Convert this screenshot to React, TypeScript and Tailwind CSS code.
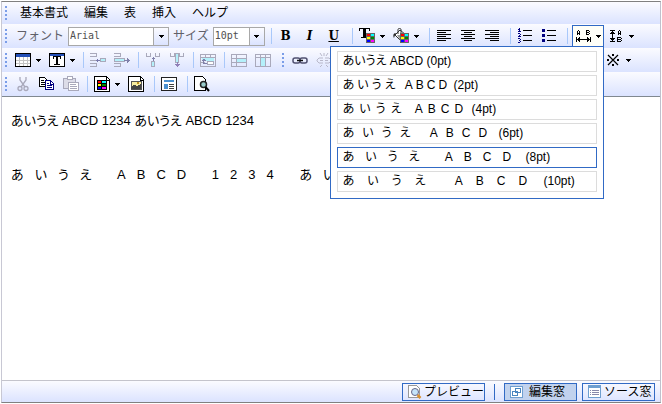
import React, { useState } from "react";
import type { ReactNode } from "react";

const NAVY = "#000080";
const CYAN = "#b4f0fa";
const DIM = "#a9a9bb";

function Icon({ children, size = 16 }: { children: ReactNode; size?: number }) {
  return (
    <svg width={size} height={size} viewBox={`0 0 ${size} ${size}`} fill="none" shapeRendering="crispEdges" aria-hidden="true" className="shrink-0">
      {children}
    </svg>
  );
}

function Arrow() {
  return (
    <svg width="5" height="3" viewBox="0 0 5 3" shapeRendering="crispEdges" aria-hidden="true" className="shrink-0">
      <path d="M0 0h5v1H0zM1 1h3v1H1zM2 2h1v1H2z" fill="#000" />
    </svg>
  );
}

function Handle() {
  return (
    <div className="flex shrink-0 flex-col gap-0.5" aria-hidden="true">
      <span className="size-0.5 bg-[#7a9de8]" />
      <span className="size-0.5 bg-[#7a9de8]" />
      <span className="size-0.5 bg-[#7a9de8]" />
      <span className="size-0.5 bg-[#7a9de8]" />
    </div>
  );
}

function Sep({ tight = false }: { tight?: boolean }) {
  return <div className={`${tight ? "ml-1" : "ml-1.5"} mr-0.5 h-4 w-px shrink-0 bg-[#a9c8fa]`} />;
}

function Tool({ label, children }: { label: string; children: ReactNode }) {
  return (
    <button type="button" aria-label={label} className="flex h-5 w-6 shrink-0 items-center justify-center font-['DejaVu_Serif','Liberation_Serif',serif] text-xs font-bold">
      {children}
    </button>
  );
}

function DropTool({ label, children }: { label: string; children: ReactNode }) {
  return (
    <button type="button" aria-label={label} aria-haspopup="menu" className="flex h-5 w-[34px] shrink-0 items-center gap-[5px] px-1">
      {children}
      <Arrow />
    </button>
  );
}

function Row({ children }: { children: ReactNode }) {
  return <div className="flex h-6 items-center bg-linear-to-b from-[#fbfbff] to-[#dbe3ff] pl-[3px]">{children}</div>;
}

function Swatches({ x, y, s = 3 }: { x: number; y: number; s?: number }) {
  const colors = ["#f00", "#0ff", "#ff0", "#080", "#00f", "#f0f"];
  return (
    <>
      <rect x={x} y={y} width={9} height={10} fill="#666" />
      {colors.map((c, i) => (
        <rect key={c} x={x + 1 + (i % 2) * 4} y={y + 1 + Math.floor(i / 2) * 3} width={s} height={2} fill={c} />
      ))}
    </>
  );
}

function Combo({ label, value, options, width }: { label: string; value: string; options: string[]; width: string }) {
  return (
    <label className="flex shrink-0 items-center gap-1 text-[#606068]">
      {label}
      <span className={`relative block ${width}`}>
        <select
          defaultValue={value}
          className="block h-[19px] w-full appearance-none border border-[#a8a8a8] bg-white pl-px font-['DejaVu_Sans_Mono',monospace] text-[10px] text-[#505050]"
        >
          {options.map((o) => (
            <option key={o}>{o}</option>
          ))}
        </select>
        <span className="pointer-events-none absolute inset-y-0 right-0 flex w-4 items-center justify-center border border-[#a8a8a8] bg-linear-to-b from-[#fbfbff] to-[#dbe3ff]">
          <Arrow />
        </span>
      </span>
    </label>
  );
}

const spacings = [
  { pt: "0pt", tracking: "" },
  { pt: "2pt", tracking: "tracking-[3px]" },
  { pt: "4pt", tracking: "tracking-[5px]" },
  { pt: "6pt", tracking: "tracking-[8px]" },
  { pt: "8pt", tracking: "tracking-[11px]" },
  { pt: "10pt", tracking: "tracking-[13px]" },
];

function SpacingMenu() {
  const [current, setCurrent] = useState("8pt");
  return (
    <div role="menu" className="absolute top-5 -right-px z-10 flex w-[274px] flex-col gap-[3px] border border-[#316ac5] bg-white px-1.5 pt-1 pb-1.5">
      {spacings.map((s) => (
        <button
          key={s.pt}
          type="button"
          role="menuitemradio"
          aria-checked={s.pt === current}
          onClick={() => setCurrent(s.pt)}
          className={`h-[21px] border pl-[5px] text-left font-['Liberation_Sans','Noto_Sans_CJK_JP',sans-serif] text-xs/[19px] whitespace-pre text-black [font-feature-settings:'palt'] ${
            s.pt === current ? "border-[#316ac5]" : "border-[#dcdcdc]"
          }`}
        >
          <span className={s.tracking}>あいうえ ABCD</span> ({s.pt})
        </button>
      ))}
    </div>
  );
}

function StatusButton({ active = false, width, icon, children }: { active?: boolean; width: string; icon: ReactNode; children: ReactNode }) {
  return (
    <button
      type="button"
      className={`flex h-[18px] shrink-0 items-center border border-[#316ac5] pl-1 whitespace-nowrap ${width} ${active ? "gap-1 bg-[#c1d2ee]" : "gap-px"}`}
    >
      {icon}
      <span className="leading-4">{children}</span>
    </button>
  );
}

export default function App() {
  return (
    <div className="h-screen bg-white p-px font-['Liberation_Sans','Noto_Sans_CJK_JP',sans-serif] text-xs text-black">
      <div className="flex h-full flex-col border border-[#808080] border-l-[#c8c8d4] border-r-[#c0c0cc]">
        <header className="border-b border-[#808890]">
          <nav className="flex h-[22px] items-center bg-linear-to-b from-[#fbfbff] to-[#dbe3ff] pl-[3px]">
            <Handle />
            <div className="ml-[5px] flex">
              {["基本書式", "編集", "表", "挿入", "ヘルプ"].map((m) => (
                <button key={m} type="button" className="px-2 leading-5">
                  {m}
                </button>
              ))}
            </div>
          </nav>

          <Row>
            <Handle />
            <div className="mr-1 ml-[9px]">
              <Combo label="フォント" value="Arial" options={["Arial", "Times"]} width="w-[101px]" />
            </div>
            <Combo label="サイズ" value="10pt" options={["10pt", "12pt"]} width="w-[52px]" />
            <Sep />
            <Tool label="太字">B</Tool>
            <Tool label="斜体">
              <i>I</i>
            </Tool>
            <Tool label="下線">
              <u>U</u>
            </Tool>
            <Sep />
            <DropTool label="文字色">
              <Icon>
                <path d="M0 0h11v3h-1V1H7v8h2v1H2V9h2V1H1v2H0z" fill="#000" />
                <Swatches x={7} y={5} />
              </Icon>
            </DropTool>
            <DropTool label="背景色">
              <Icon>
                <g shapeRendering="auto">
                  <path d="M2 7l5-5 6 5-6 5z" fill="#fff" stroke="#333" />
                  <path d="M4 7l6 0 2 1-5 4z" fill="#999" />
                  <path d="M5 6V1.500a1.500 1 0 0 1 3 0V5" stroke="#333" />
                  <path d="M3 5C0 5 0 8 1 10l1-3z" fill="#222" />
                </g>
                <Swatches x={7} y={5} />
              </Icon>
            </DropTool>
            <Sep />
            <Tool label="左揃え">
              <Icon>
                <path d="M1 2.500h14M1 4.500h9M1 6.500h14M1 8.500h9M1 10.500h14M1 12.500h9" stroke="#000" />
              </Icon>
            </Tool>
            <Tool label="中央揃え">
              <Icon>
                <path d="M1 2.500h14M4 4.500h8M1 6.500h14M4 8.500h8M1 10.500h14M4 12.500h8" stroke="#000" />
              </Icon>
            </Tool>
            <Tool label="右揃え">
              <Icon>
                <path d="M1 2.500h14M6 4.500h9M1 6.500h14M6 8.500h9M1 10.500h14M6 12.500h9" stroke="#000" />
              </Icon>
            </Tool>
            <Sep />
            <Tool label="番号付きリスト">
              <Icon>
                <path d="M6 2.500h9M6 7.500h9M6 12.500h9" stroke="#000" />
                <path d="M1 1.500h1M2.500 0v4M1 3.500h3M1 5.500h2M3.500 6v1M2.500 7v1M1 8.500h3M1 10.500h2M3.500 11v1M2 12.500h1M3.500 13v1M1 14.500h2" stroke={NAVY} />
              </Icon>
            </Tool>
            <Tool label="箇条書き">
              <Icon>
                <path d="M6 2.500h9M6 7.500h9M6 12.500h9" stroke="#000" />
                <path d="M1 1h3v3H1zM1 6h3v3H1zM1 11h3v3H1z" fill={NAVY} />
              </Icon>
            </Tool>
            <Sep />
            <div className="relative ml-0.5 h-[22px] w-8 shrink-0 border border-[#316ac5] bg-[#fffff7]">
              <button type="button" aria-label="文字間隔" aria-haspopup="menu" aria-expanded="true" className="flex h-5 w-full items-center gap-1 pl-[3px]">
                <Icon>
                  <path d="M2.500 2v1M1.500 3v4M3.500 3v4M2 5.500h1M10.500 2v5M11 2.500h2M11 4.500h2M11 6.500h2M13.500 3v1M13.500 5v1" stroke="#000" />
                  <path d="M.5 9v5M14.500 9v5M1 11.500h13M2.500 10v3M3.500 9v5M12.500 10v3M11.500 9v5" stroke="#000" />
                </Icon>
                <Arrow />
              </button>
              <SpacingMenu />
            </div>
            <DropTool label="行間隔">
              <Icon>
                <path d="M2 2.500h5M2 13.500h5M4.500 3v10M3 4.500h3M3 11.500h3M2 5.500h5M2 10.500h5" stroke="#000" />
                <path d="M11.500 2v1M10.500 3v4M12.500 3v4M11 5.500h1M9.500 9v5M10 9.500h3M10 11.500h3M10 13.500h3M13.500 10v1M13.500 12v1" stroke="#000" />
              </Icon>
            </DropTool>
          </Row>

          <Row>
            <Handle />
            <div className="ml-1 flex shrink-0 items-center">
              <DropTool label="表の挿入">
                <Icon>
                  <path d="M.5 1.500h15v13H.5z" fill="#fff" stroke="#000" />
                  <path d="M1 2h14v3H1z" fill="#2450b8" />
                  <path d="M1 8.500h14M1 11.500h14M4.500 5v9M8.500 5v9M12.500 5v9" stroke="#c4c4c4" />
                </Icon>
              </DropTool>
              <DropTool label="表の文字">
                <Icon>
                  <path d="M.5 1.500h15v13H.5z" fill="#fff" stroke="#000" />
                  <path d="M1 2h14v2H1z" fill="#2450b8" />
                  <path d="M4 4h8v3h-1V5H9v7h2v1H5v-1h2V5H5v2H4z" fill="#000" />
                </Icon>
              </DropTool>
              <Sep tight />
              <Tool label="行の挿入">
                <Icon>
                  <path d="M0 1.500h6v3H0M0 11.500h6v3H0M0 8h6" stroke={DIM} />
                  <path d="M6 8.500h4M7.500 7v3" stroke="#7878aa" />
                  <path d="M10.500 6.500h5v3h-5z" fill={CYAN} stroke={DIM} />
                </Icon>
              </Tool>
              <Tool label="行の追加">
                <Icon>
                  <path d="M0 1.500h6v3H0M0 11.500h6v3H0" stroke={DIM} />
                  <path d="M0 6.500h10v3H0z" fill={CYAN} stroke={DIM} />
                  <path d="M10 8.500h6M13.500 6v5M14.500 7v3" stroke="#8080aa" />
                </Icon>
              </Tool>
              <Sep tight />
              <Tool label="列の挿入">
                <Icon>
                  <path d="M1.500 1v3h4V1M10.500 1v3h4V1" stroke={DIM} />
                  <path d="M6.500 9.500h3v5h-3z" fill={CYAN} stroke={DIM} />
                  <path d="M8.500 5v4M7 6.500h3" stroke="#8080aa" />
                </Icon>
              </Tool>
              <Tool label="列の追加">
                <Icon>
                  <path d="M1.500 1v3h4V1M10.500 1v3h4V1" stroke={DIM} />
                  <path d="M6.500 1v9h3V1z" fill={CYAN} stroke={DIM} />
                  <path d="M8.500 10v5M6 12.500h5M7 13.500h3" stroke="#9080b8" />
                </Icon>
              </Tool>
              <Sep tight />
              <Tool label="セルの結合">
                <Icon>
                  <path d="M.5 2.500h15v12H.5zM0 5.500h16M5.500 2v3M10.500 2v3M0 10.500h5" stroke={DIM} />
                  <path d="M2 6h12v3H2z" fill={CYAN} />
                  <path d="M7.500 9.500h6v3h-6z" fill="#fff" stroke={DIM} />
                  <path d="M3.500 7v4h3M2 8.500h4M3 7.500h2" stroke="#8080aa" />
                </Icon>
              </Tool>
              <Sep tight />
              <Tool label="行の選択">
                <Icon>
                  <path d="M5 6h10v4H5z" fill={CYAN} />
                  <path d="M.5 2.500h15v12H.5zM0 6.500h16M0 10.500h16M5.500 2v12" stroke={DIM} />
                </Icon>
              </Tool>
              <Tool label="列の選択">
                <Icon>
                  <path d="M6 6h5v8H6z" fill={CYAN} />
                  <path d="M.5 2.500h15v12H.5zM0 5.500h16M5.500 2v12M10.500 2v12" stroke={DIM} />
                </Icon>
              </Tool>
            </div>
            <div className="mr-1 ml-[7px]">
              <Handle />
            </div>
            <Tool label="リンク">
              <Icon>
                <g shapeRendering="auto" strokeWidth="1.500">
                  <rect x="1" y="6" width="7" height="5" rx="2" stroke="#505070" />
                  <rect x="8" y="6" width="7" height="5" rx="2" stroke="#505070" />
                  <path d="M5 8.500h6" stroke="#111" />
                </g>
              </Icon>
            </Tool>
            <Tool label="リンク解除">
              <Icon>
                <g shapeRendering="auto" stroke="#b8b8ca">
                  <path d="M7 6H3L1 8v1l2 2h4M9 6h4l2 2v1l-2 2H9M4 8.500h3M9 8.500h3M6 4L4 1M10 4l2-3M6 13l-2 2M10 13l2 2M8 1v3" />
                </g>
              </Icon>
            </Tool>
            <div className="ml-[265px]">
              <DropTool label="記号">
                <Icon>
                  <g shapeRendering="auto">
                    <path d="M3 3l10 10M13 3L3 13" stroke="#000" strokeWidth="1.200" />
                  </g>
                  <path d="M7 2h2v2H7zM7 12h2v2H7zM2 7h2v2H2zM12 7h2v2h-2z" fill="#000" />
                </Icon>
              </DropTool>
            </div>
          </Row>

          <Row>
            <Handle />
            <div className="ml-1 flex items-center">
              <Tool label="切り取り">
                <Icon>
                  <g shapeRendering="auto" stroke={DIM} strokeWidth="1.300">
                    <path d="M5 1v3l5 7M11 1v3L6 11" />
                    <circle cx="5" cy="12.500" r="2" />
                    <circle cx="11" cy="12.500" r="2" />
                  </g>
                </Icon>
              </Tool>
              <Tool label="コピー">
                <Icon>
                  <path d="M.5 1.500h5l3 3v6h-8z" fill="#fff" stroke="#000" />
                  <path d="M2 4.500h3M2 6.500h5M2 8.500h5" stroke="#000" />
                  <path d="M6.500 4.500h5l3 3v6h-8z" fill="#fff" stroke={NAVY} />
                  <path d="M11.500 5v3h3M8 7.500h2M8 9.500h5M8 11.500h5" stroke={NAVY} />
                </Icon>
              </Tool>
              <Tool label="貼り付け">
                <Icon>
                  <path d="M.5 2.500h12v10H.5z" fill="#dcdce8" stroke={DIM} />
                  <path d="M4 .5h5v3H4z" fill="#fff" stroke={DIM} />
                  <path d="M5.500 6.500h10v8h-10z" fill="#fff" stroke={DIM} />
                  <path d="M7 8.500h6M7 10.500h7M7 12.500h7" stroke={DIM} />
                </Icon>
              </Tool>
              <Sep tight />
              <DropTool label="配色">
                <Icon>
                  <path d="M.5 .5h12l3 3v12H.5z" fill="#fff" stroke="#000" />
                  <path d="M12.500 1v3h3" stroke="#000" />
                  <path d="M3 4h10v10H3z" fill="#000" />
                  <path d="M4 5h3v2H4z" fill="#f00" />
                  <path d="M8 5h4v2H8z" fill="#0ff" />
                  <path d="M4 8h3v2H4z" fill="#ff0" />
                  <path d="M8 8h4v2H8z" fill="#080" />
                  <path d="M4 11h3v2H4z" fill="#00f" />
                  <path d="M8 11h4v2H8z" fill="#f0f" />
                </Icon>
              </DropTool>
              <Tool label="画像">
                <Icon>
                  <path d="M.5 .5h12l3 3v12H.5z" fill="#fff" stroke="#000" />
                  <path d="M12.500 1v3h3" stroke="#000" />
                  <path d="M3 5h10v8H3z" fill="#f7eda0" stroke="#555" />
                  <path d="M3 11l3-2 3 1 4-2v5H3z" fill="#444" />
                  <path d="M9 6h2v2H9z" fill="#c09020" />
                </Icon>
              </Tool>
              <Sep />
              <Tool label="プロパティ">
                <Icon>
                  <path d="M.5 1.500h15v13H.5z" fill="#fff" stroke="#222" />
                  <path d="M3 4h10v2H3zM3 8h4v5H3z" fill="#4a90d0" />
                  <path d="M8 8.500h5M8 10.500h5M8 12.500h5" stroke="#444" />
                </Icon>
              </Tool>
              <Sep />
              <Tool label="検索">
                <Icon>
                  <path d="M.5 .5h8l3 3v11H.5z" fill="#fff" stroke="#000" />
                  <g shapeRendering="auto">
                    <circle cx="9.500" cy="8.500" r="3" fill="#9cc" stroke="#222" strokeWidth="1.500" />
                    <path d="M11.500 11l3.500 4" stroke="#000" strokeWidth="2" />
                  </g>
                </Icon>
              </Tool>
            </div>
          </Row>
        </header>

        <main className="flex-1 px-[9px] pt-[15px] text-[13px]/[18px] [font-feature-settings:'palt']">
          <p>あいうえ ABCD 1234 あいうえ ABCD 1234</p>
          <p className="mt-9 tracking-[11px] whitespace-nowrap">あいうえ ABCD 1234 あい</p>
        </main>

        <footer className="flex h-[22px] items-center justify-end border-t border-[#c4c4cc] bg-linear-to-b from-[#fbfbff] to-[#dbe3ff] pr-[5px]">
          <StatusButton
            width="w-[83px]"
            icon={
              <Icon>
                <path d="M1.500 1.500h8l3 3v9h-11z" fill="#fff" stroke="#999" />
                <g shapeRendering="auto">
                  <circle cx="8" cy="8" r="3.500" fill="#c4e4fa" stroke="#668" />
                  <path d="M10.500 11l3 3" stroke="#d89030" strokeWidth="2.500" />
                </g>
              </Icon>
            }
          >
            プレビュー
          </StatusButton>
          <div className="mx-[9px] h-4 w-px bg-[#316ac5]" />
          <StatusButton
            active
            width="w-[73px]"
            icon={
              <Icon>
                <path d="M1.500 2.500h12v11h-12z" fill="#fff" stroke="#6f9fd0" />
                <path d="M6.500 4.500h5v4h-5zM3.500 7.500h5v4h-5z" fill="#fff" stroke="#4a86c0" />
              </Icon>
            }
          >
            編集窓
          </StatusButton>
          <div className="ml-[5px]">
            <StatusButton
              width="w-[73px]"
              icon={
                <Icon>
                  <path d="M1.500 1.500h12v12h-12z" fill="#fff" stroke="#6f9fd0" />
                  <path d="M2 2h11v2H2z" fill="#6f9fd0" />
                  <path d="M3 6.500h1M5 6.500h7M3 8.500h1M5 8.500h7M3 10.500h1M5 10.500h7" stroke="#88a" />
                </Icon>
              }
            >
              ソース窓
            </StatusButton>
          </div>
        </footer>
      </div>
    </div>
  );
}
